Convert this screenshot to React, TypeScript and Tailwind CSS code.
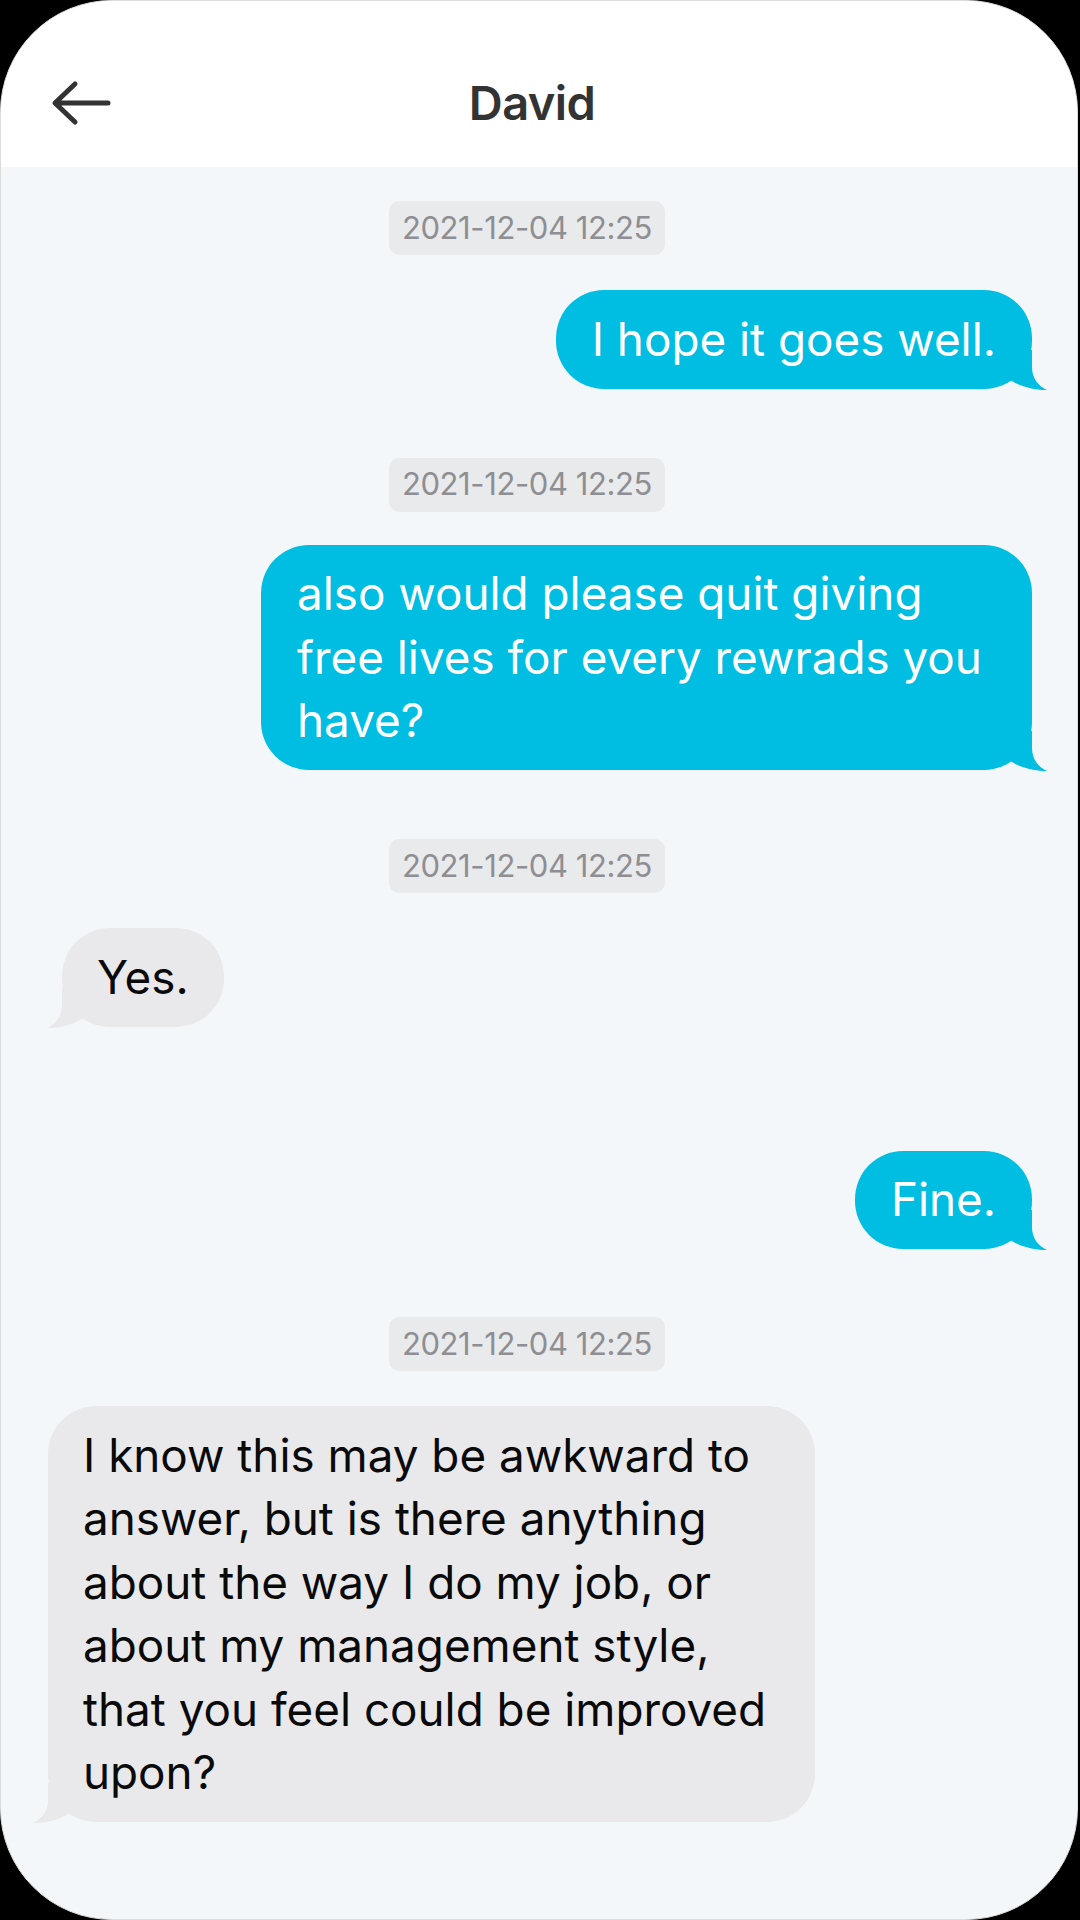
import { ReactNode } from 'react';

type Message =
  | { kind: 'time'; text: string }
  | { kind: 'out'; text: string }
  | { kind: 'in'; text: string; indent?: boolean };

const messages: Message[] = [
  { kind: 'time', text: '2021-12-04 12:25' },
  { kind: 'out', text: 'I hope it goes well.' },
  { kind: 'time', text: '2021-12-04 12:25' },
  { kind: 'out', text: 'also would please quit giving free lives for every rewrads you have?' },
  { kind: 'time', text: '2021-12-04 12:25' },
  { kind: 'in', text: 'Yes.', indent: true },
  { kind: 'out', text: 'Fine.' },
  { kind: 'time', text: '2021-12-04 12:25' },
  {
    kind: 'in',
    text: 'I know this may be awkward to answer, but is there anything about the way I do my job, or about my management style, that you feel could be improved upon?'
  }
];

// bubble tail, drawn for the right side; mirrored for incoming messages
function Tail({ className }: { className: string }) {
  return (
    <svg
      viewBox="0 0 40 40"
      width={40}
      height={40}
      className={`absolute bottom-[-1px] ${className}`}
    >
      <path
        d="M0 0 L25 0 L25 17 C25 28 31 36 40 40 C31 40.5 15 37.5 5 31 L0 28 Z"
        fill="currentColor"
      />
    </svg>
  );
}

function Timestamp({ children }: { children: ReactNode }) {
  return (
    <div className="flex justify-center pr-[24px]">
      <span className="rounded-[10px] bg-[#e9eaec] px-[13px] h-[54px] flex items-center text-[31px] text-[#8e8e93] tracking-[-0.4px]">
        {children}
      </span>
    </div>
  );
}

function Bubble({ msg }: { msg: Message }) {
  if (msg.kind === 'out') {
    return (
      <div className="flex justify-end pr-[45px]">
        <div className="relative max-w-[771px] rounded-[48px] bg-[#00bde2] text-white px-[36px] py-[17.5px] text-[45.8px] leading-[63.5px]">
          <span className="relative z-10">{msg.text}</span>
          <Tail className="right-[-15px] text-[#00bde2]" />
        </div>
      </div>
    );
  }
  if (msg.kind === 'in') {
    return (
      <div className={`flex justify-start ${msg.indent ? 'pl-[61px]' : 'pl-[47px]'}`}>
        <div className="relative max-w-[767px] rounded-[48px] bg-[#e9e9eb] text-[#0a0a0a] px-[35px] py-[17.5px] text-[45.8px] leading-[63.5px]">
          <span className="relative z-10">{msg.text}</span>
          <Tail className="left-[-15px] -scale-x-100 text-[#e9e9eb]" />
        </div>
      </div>
    );
  }
  return <Timestamp>{msg.text}</Timestamp>;
}

export default function App() {
  return (
    <div className="w-[1080px] h-[1920px] bg-black font-['Inter','Noto_Sans',sans-serif]">
      <div className="w-[1078px] h-[1920px] rounded-[112px] overflow-hidden border border-[#dcdcdc] bg-[#f4f7fa] flex flex-col">
        <header className="h-[166px] shrink-0 bg-white pt-[38px] flex items-center relative">
          <button type="button" className="absolute left-[47px] top-[76px] p-0">
            <svg width="66" height="52" viewBox="0 0 66 52" fill="none">
              <path
                d="M60 26 H8 M27 7 L7 26 L27 45"
                stroke="#333"
                strokeWidth="5"
                strokeLinecap="round"
                strokeLinejoin="round"
              />
            </svg>
          </button>
          <h1 className="w-full text-center pr-[14px] text-[47px] font-semibold text-[#333] tracking-[-0.6px]">
            David
          </h1>
        </header>
        <main className="flex flex-col pt-[34px]">
          <Bubble msg={messages[0]} />
          <div className="h-[35px]" />
          <Bubble msg={messages[1]} />
          <div className="h-[69px]" />
          <Bubble msg={messages[2]} />
          <div className="h-[33px]" />
          <Bubble msg={messages[3]} />
          <div className="h-[69px]" />
          <Bubble msg={messages[4]} />
          <div className="h-[35px]" />
          <Bubble msg={messages[5]} />
          <div className="h-[124px]" />
          <Bubble msg={messages[6]} />
          <div className="h-[68px]" />
          <Bubble msg={messages[7]} />
          <div className="h-[35px]" />
          <Bubble msg={messages[8]} />
        </main>
      </div>
    </div>
  );
}
